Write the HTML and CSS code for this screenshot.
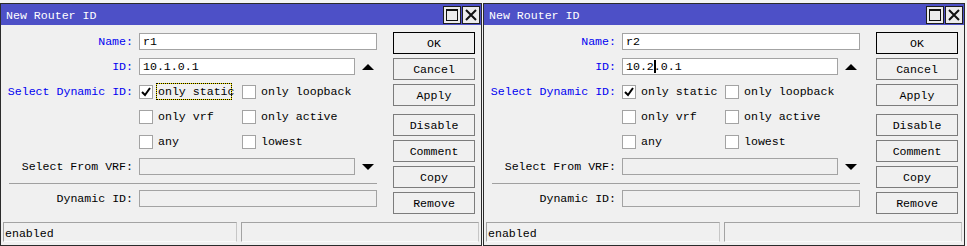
FILE: index.html
```html
<!DOCTYPE html>
<html>
<head>
  <meta charset="UTF-8">
  <title>New Router ID</title>
  <link rel="stylesheet" href="styles.css">
</head>
<body>
  <div class="desk">

    <!-- router r1 -->
    <div class="window">
      <div class="titlebar">
        <span class="title">New Router ID</span>
        <span class="tbtn max"><span class="sq"></span></span>
        <span class="tbtn close">
          <svg width="16" height="16" viewBox="0 0 16 16"><path d="M3 3L13 13M13 3L3 13" stroke="#111" stroke-width="2"/></svg>
        </span>
      </div>
      <div class="main">
        <div class="form">
          <div class="row first">
            <label class="lbl blue">Name:</label>
            <div class="field wide">r1</div>
          </div>
          <div class="row">
            <label class="lbl blue">ID:</label>
            <div class="combo">
              <div class="field">10.1.0.1</div>
              <span class="arrow up"></span>
            </div>
          </div>
          <div class="row">
            <label class="lbl blue">Select Dynamic ID:</label>
            <div class="checks">
              <div class="cb">
                <span class="box"><svg width="12" height="12" viewBox="0 0 12 12"><path d="M2 6L5 9L10 2" stroke="#000" stroke-width="2" fill="none"/></svg></span>
                <span class="focus">only static</span>
              </div>
              <div class="cb"><span class="box"></span>only loopback</div>
            </div>
          </div>
          <div class="row">
            <label class="lbl"></label>
            <div class="checks">
              <div class="cb"><span class="box"></span>only vrf</div>
              <div class="cb"><span class="box"></span>only active</div>
            </div>
          </div>
          <div class="row">
            <label class="lbl"></label>
            <div class="checks">
              <div class="cb"><span class="box"></span>any</div>
              <div class="cb"><span class="box"></span>lowest</div>
            </div>
          </div>
          <div class="row">
            <label class="lbl">Select From VRF:</label>
            <div class="combo">
              <div class="field off"></div>
              <span class="arrow down"></span>
            </div>
          </div>
          <div class="sep"></div>
          <div class="row last">
            <label class="lbl">Dynamic ID:</label>
            <div class="field wide off"></div>
          </div>
        </div>
        <div class="buttons">
          <button class="default">OK</button>
          <button>Cancel</button>
          <button>Apply</button>
          <button class="gap">Disable</button>
          <button>Comment</button>
          <button>Copy</button>
          <button>Remove</button>
        </div>
      </div>
      <div class="status">
        <div class="cell">enabled</div>
        <div class="cell"></div>
      </div>
    </div>

    <!-- router r2 -->
    <div class="window">
      <div class="titlebar">
        <span class="title">New Router ID</span>
        <span class="tbtn max"><span class="sq"></span></span>
        <span class="tbtn close">
          <svg width="16" height="16" viewBox="0 0 16 16"><path d="M3 3L13 13M13 3L3 13" stroke="#111" stroke-width="2"/></svg>
        </span>
      </div>
      <div class="main">
        <div class="form">
          <div class="row first">
            <label class="lbl blue">Name:</label>
            <div class="field wide">r2</div>
          </div>
          <div class="row">
            <label class="lbl blue">ID:</label>
            <div class="combo">
              <div class="field">10.2<span class="caret"></span>.0.1</div>
              <span class="arrow up"></span>
            </div>
          </div>
          <div class="row">
            <label class="lbl blue">Select Dynamic ID:</label>
            <div class="checks">
              <div class="cb">
                <span class="box"><svg width="12" height="12" viewBox="0 0 12 12"><path d="M2 6L5 9L10 2" stroke="#000" stroke-width="2" fill="none"/></svg></span>
                only static
              </div>
              <div class="cb"><span class="box"></span>only loopback</div>
            </div>
          </div>
          <div class="row">
            <label class="lbl"></label>
            <div class="checks">
              <div class="cb"><span class="box"></span>only vrf</div>
              <div class="cb"><span class="box"></span>only active</div>
            </div>
          </div>
          <div class="row">
            <label class="lbl"></label>
            <div class="checks">
              <div class="cb"><span class="box"></span>any</div>
              <div class="cb"><span class="box"></span>lowest</div>
            </div>
          </div>
          <div class="row">
            <label class="lbl">Select From VRF:</label>
            <div class="combo">
              <div class="field off"></div>
              <span class="arrow down"></span>
            </div>
          </div>
          <div class="sep"></div>
          <div class="row last">
            <label class="lbl">Dynamic ID:</label>
            <div class="field wide off"></div>
          </div>
        </div>
        <div class="buttons">
          <button class="default">OK</button>
          <button>Cancel</button>
          <button>Apply</button>
          <button class="gap">Disable</button>
          <button>Comment</button>
          <button>Copy</button>
          <button>Remove</button>
        </div>
      </div>
      <div class="status">
        <div class="cell">enabled</div>
        <div class="cell"></div>
      </div>
    </div>

  </div>
</body>
</html>
```

FILE: styles.css
```css
body {
  margin: 0;
  background: #f4f4f4;
  font-family: "Liberation Mono", "DejaVu Sans Mono", monospace;
  font-size: 11.6px;
  color: #000;
}

.desk {
  display: flex;
  gap: 1px;
  padding-top: 3px;
}

.window {
  width: 482px;
  height: 243px;
  box-sizing: border-box;
  border: 1px solid #2b2b2b;
  background: #f0f0f0;
  display: flex;
  flex-direction: column;
  flex-shrink: 0;
}

.titlebar {
  height: 21px;
  background: #4d50c7;
  color: #fff;
  display: flex;
  align-items: center;
  padding-left: 5px;
  padding-right: 1px;
}

.title {
  flex: 1;
  padding-top: 2px;
}

.tbtn {
  width: 18px;
  height: 18px;
  box-sizing: border-box;
  border: 1px solid #1e1e1e;
  background: #ececec;
  margin-left: 1px;
  display: flex;
  align-items: center;
  justify-content: center;
}

.tbtn .sq {
  width: 12px;
  height: 12px;
  box-sizing: border-box;
  border: 1px solid #111;
  border-top-width: 2px;
}

.main {
  display: flex;
  height: 195px;
}

.form {
  width: 376px;
  padding-top: 3px;
}

.row {
  display: grid;
  grid-template-columns: 132px 1fr;
  column-gap: 6px;
  align-items: center;
  height: 25px;
}

.row.first {
  height: 26px;
}

.row.last {
  height: 23px;
}

.lbl {
  text-align: right;
  white-space: nowrap;
}

.lbl.blue {
  color: #0000f0;
}

.field {
  height: 17px;
  width: 216px;
  box-sizing: border-box;
  border: 1px solid #a3a3a3;
  background: #fff;
  padding-left: 3px;
  line-height: 15px;
  white-space: nowrap;
}

.field.wide {
  width: 238px;
}

.field.off {
  background: #f0f0f0;
}

.caret {
  display: inline-block;
  width: 2px;
  height: 13px;
  margin-right: -2px;
  background: #000;
  vertical-align: -3px;
}

.combo {
  display: flex;
  align-items: center;
}

.arrow {
  width: 0;
  height: 0;
  margin-left: 7px;
  border-left: 6px solid transparent;
  border-right: 6px solid transparent;
}

.arrow.up {
  border-bottom: 6px solid #000;
}

.arrow.down {
  border-top: 6px solid #000;
}

.checks {
  display: grid;
  grid-template-columns: 103px 103px;
}

.cb {
  display: flex;
  align-items: center;
  gap: 5px;
  white-space: nowrap;
}

.box {
  width: 14px;
  height: 14px;
  box-sizing: border-box;
  border: 1px solid #a3a3a3;
  background: #fff;
  display: flex;
  align-items: center;
  justify-content: center;
  flex-shrink: 0;
}

.focus {
  display: inline-block;
  width: 74px;
  height: 15px;
  line-height: 15px;
  margin-left: -1px;
  padding-left: 1px;
  box-sizing: border-box;
  outline: 1px dotted #000;
  box-shadow: 0 0 0 1px #f2e200;
}

.sep {
  height: 1px;
  background: #a0a0a0;
  margin: 4px 0 3px 8px;
}

.buttons {
  display: flex;
  flex-direction: column;
  gap: 4px;
  margin-left: 16px;
  padding-top: 7px;
}

button {
  width: 82px;
  height: 22px;
  box-sizing: border-box;
  border: 1px solid #7c7c7c;
  background: #f0f0f0;
  font-family: inherit;
  font-size: inherit;
  color: #000;
  padding: 0;
}

button.default {
  border-color: #000;
}

button.gap {
  margin-top: 4px;
}

.status {
  display: grid;
  grid-template-columns: 234px 1fr;
  column-gap: 4px;
  padding: 2px 2px 0 2px;
}

.cell {
  height: 20px;
  box-sizing: border-box;
  border: 1px solid #a3a3a3;
  border-bottom-color: #fafafa;
  border-right-color: #c6c6c6;
  padding: 2px 0 0 1px;
  line-height: 18px;
}
```
